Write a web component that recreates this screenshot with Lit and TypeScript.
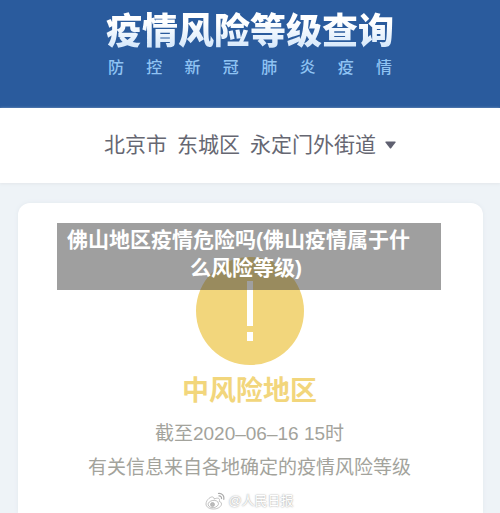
import { LitElement, html, css } from "lit";
import { customElement, property } from "lit/decorators.js";

@customElement("risk-card")
class RiskCard extends LitElement {
  @property() level = "";
  @property() time = "";

  static styles = css`
    :host {
      position: relative;
      display: flex;
      flex-direction: column;
      align-items: center;
      flex: 1;
      box-sizing: border-box;
      margin: 20px 17px 0 18px;
      padding: 54px 10px 0 8px;
      border-radius: 12px 12px 0 0;
      background: #fff;
      box-shadow: 0 0 4px #e2e8ee;
      text-align: center;
    }
    .icon {
      display: block;
      width: 108px;
      height: 108px;
    }
    .level {
      margin: 8px 0 0;
      font-size: 27px;
      line-height: 36px;
      font-weight: 700;
      color: #f2d67c;
    }
    .note {
      margin: 0;
      font-size: 19px;
      line-height: 34px;
      color: #a3a39c;
    }
    .time {
      margin-top: 8px;
    }
    .mark {
      display: flex;
      align-items: center;
      gap: 3px;
      margin-top: 6px;
      font-size: 13px;
      line-height: 20px;
      color: #fff;
      text-shadow: 0 0 2px #aaa, 0 0 1px #bbb;
    }
    .weibo {
      width: 20px;
      height: 18px;
    }
    .caption {
      position: absolute;
      top: 20px;
      left: 39px;
      right: 42px;
      box-sizing: border-box;
      margin: 0;
      padding: 3px 16px 8px 10px;
      background: rgba(64, 64, 64, 0.5);
      font-size: 21px;
      line-height: 28px;
      font-weight: 700;
      color: #fff;
    }
    .line {
      display: block;
      white-space: nowrap;
    }
    .first {
      text-align: left;
    }
  `;

  render() {
    return html`
      <svg class="icon" viewBox="0 0 108 108" aria-hidden="true">
        <circle cx="54" cy="54" r="54" fill="#f2d67c" />
        <path d="M51 24h6v45h-6zM51 75h6v9h-6z" fill="#fff" />
      </svg>
      <h2 class="level">${this.level}</h2>
      <p class="note time">${this.time}</p>
      <p class="note">有关信息来自各地确定的疫情风险等级</p>
      <div class="mark">
        <svg class="weibo" viewBox="0 0 20 18" fill="none" stroke="#aaa" stroke-width=".7" aria-hidden="true">
          <path d="M8 5.2C6.600 3.800 1 7.500 1 12c0 3 3.300 5 7.500 5 5 0 8-2.800 8-5 0-1.600-1.200-2.300-2.300-2.600.6-1.600.3-2.600-.6-3-1.200-.5-3 0-4.600.6C9.400 6 8.700 5.500 8 5.200z" />
          <ellipse cx="8.300" cy="12" rx="5.200" ry="3.600" transform="rotate(-8 8.300 12)" />
          <circle cx="7.500" cy="12.500" r="2" fill="#bbb" />
          <path d="M13 1.500c3.800-.8 6.800 2.500 5.600 6.200M13.500 4c2-.4 3.500 1.200 2.900 3" stroke-width="1.200" />
        </svg>
        <span>@人民日报</span>
      </div>
      <p class="caption">
        <span class="line first">佛山地区疫情危险吗(佛山疫情属于什</span>
        <span class="line">么风险等级)</span>
      </p>
    `;
  }
}

@customElement("app-root")
class AppRoot extends LitElement {
  static styles = css`
    :host {
      display: flex;
      flex-direction: column;
      min-height: 100vh;
      background: #eef3f7;
      font-family: "Liberation Sans", "Noto Sans CJK SC", sans-serif;
    }
    .header {
      display: flex;
      flex-direction: column;
      align-items: center;
      padding: 8px 0 28px;
      background: #2a5b9d;
    }
    .heading {
      margin: 0;
      font-size: 36px;
      line-height: 48px;
      font-weight: 900;
      color: transparent;
      background: linear-gradient(#fff 30%, #cfe4fa 90%);
      background-clip: text;
      -webkit-background-clip: text;
    }
    .sub {
      display: flex;
      justify-content: space-between;
      width: 284px;
      font-size: 16px;
      line-height: 24px;
      font-weight: 500;
      color: #8fc3f3;
    }
    .region {
      display: flex;
      justify-content: center;
      align-items: center;
      gap: 8px;
      padding: 20px 0 21px;
      background: #fff;
      box-shadow: 0 1px 3px #e2e6ea;
    }
    .select {
      appearance: none;
      margin: 0;
      padding: 0;
      border: 0;
      background: none;
      font-family: inherit;
      font-size: 21px;
      line-height: 34px;
      color: #666772;
    }
    .arrow {
      width: 11px;
      height: 8px;
    }
  `;

  render() {
    return html`
      <header class="header">
        <h1 class="heading">疫情风险等级查询</h1>
        <div class="sub">${[..."防控新冠肺炎疫情"].map((c) => html`<span>${c}</span>`)}</div>
      </header>
      <div class="region">
        <select class="select" aria-label="地区">
          <option>北京市&nbsp;&thinsp;东城区&nbsp;&thinsp;永定门外街道</option>
        </select>
        <svg class="arrow" viewBox="0 0 11 8" aria-hidden="true">
          <path d="M1 .5h9q1 0 .5 1L6.300 7q-.8 1-1.600 0L.5 1.500Q0 .5 1 .5z" fill="#5f6070" />
        </svg>
      </div>
      <risk-card level="中风险地区" time="截至2020–06–16 15时"></risk-card>
    `;
  }
}
